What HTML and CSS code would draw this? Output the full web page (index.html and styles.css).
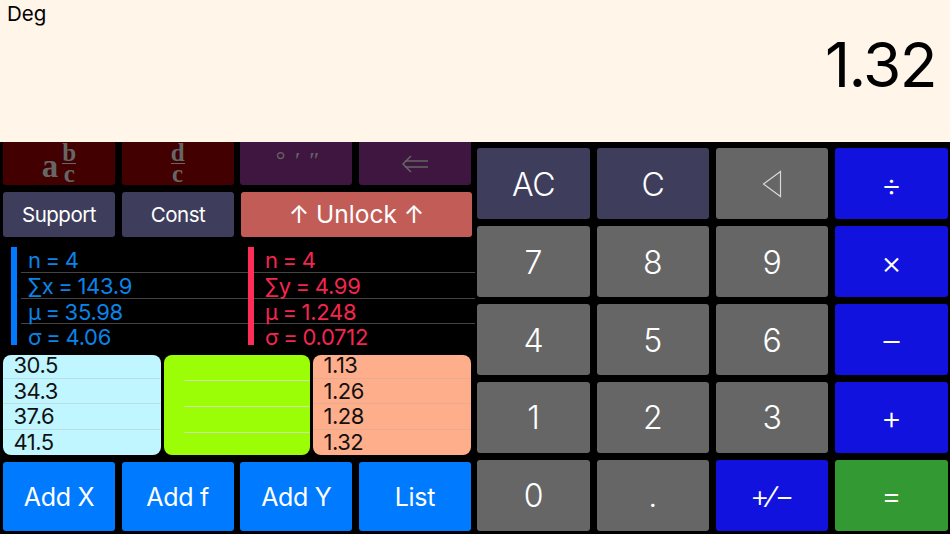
FILE: index.html
```html
<!doctype html>
<html>
<head>
  <meta charset="utf-8">
  <meta name="viewport" content="width=device-width, initial-scale=1">
  <title>Calculator</title>
  <link rel="stylesheet" href="styles.css">
</head>
<body>

  <div class="display">
    <div class="mode">Deg</div>
    <div class="value">1.32</div>
  </div>

  <div class="main">
    <div class="left">

      <div class="row locked-row">
        <div class="btn locked red">
          <span class="mixed">a</span>
          <span class="frac"><span class="num">b</span><span>c</span></span>
        </div>
        <div class="btn locked red">
          <span class="frac"><span class="num">d</span><span>c</span></span>
        </div>
        <div class="btn locked purple"><span class="dms">° ′ ″</span></div>
        <div class="btn locked purple">
          <svg width="28" height="18" viewBox="0 0 28 18" fill="none" stroke="#666" stroke-width="1.5">
            <path d="M10 1 L2 9 L10 17"/>
            <path d="M4 6 H27 M4 12 H27"/>
          </svg>
        </div>
      </div>

      <div class="row tools-row">
        <div class="btn slate">Support</div>
        <div class="btn slate">Const</div>
        <div class="btn unlock">↑ Unlock ↑</div>
      </div>

      <div class="stats">
        <div class="stat blue">
          <div class="bar"></div>
          <div class="stat-lines">
            <div class="stat-line">n = 4</div>
            <div class="stat-line">∑x = 143.9</div>
            <div class="stat-line">µ = 35.98</div>
            <div class="stat-line">σ = 4.06</div>
          </div>
        </div>
        <div class="stat pink">
          <div class="bar"></div>
          <div class="stat-lines">
            <div class="stat-line">n = 4</div>
            <div class="stat-line">∑y = 4.99</div>
            <div class="stat-line">µ = 1.248</div>
            <div class="stat-line">σ = 0.0712</div>
          </div>
        </div>
      </div>

      <div class="lists">
        <div class="list list-x">
          <div class="item">30.5</div>
          <div class="item">34.3</div>
          <div class="item">37.6</div>
          <div class="item">41.5</div>
        </div>
        <div class="list list-f">
          <div class="item"></div>
          <div class="item"></div>
          <div class="item"></div>
          <div class="item"></div>
        </div>
        <div class="list list-y">
          <div class="item">1.13</div>
          <div class="item">1.26</div>
          <div class="item">1.28</div>
          <div class="item">1.32</div>
        </div>
      </div>

      <div class="row add-row">
        <div class="btn azure">Add X</div>
        <div class="btn azure">Add f</div>
        <div class="btn azure">Add Y</div>
        <div class="btn azure">List</div>
      </div>

    </div>

    <div class="keys">
      <div class="btn key slate">AC</div>
      <div class="btn key slate">C</div>
      <div class="btn key gray">
        <svg width="20" height="28" viewBox="0 0 20 28" fill="none" stroke="#d8d8d8" stroke-width="1.2">
          <path d="M18.5 1.5 V26.5 L1.5 14 Z"/>
        </svg>
      </div>
      <div class="btn key op">÷</div>

      <div class="btn key gray">7</div>
      <div class="btn key gray">8</div>
      <div class="btn key gray">9</div>
      <div class="btn key op">×</div>

      <div class="btn key gray">4</div>
      <div class="btn key gray">5</div>
      <div class="btn key gray">6</div>
      <div class="btn key op">–</div>

      <div class="btn key gray">1</div>
      <div class="btn key gray">2</div>
      <div class="btn key gray">3</div>
      <div class="btn key op">+</div>

      <div class="btn key gray">0</div>
      <div class="btn key gray">.</div>
      <div class="btn key op sign">+∕−</div>
      <div class="btn key equals">=</div>
    </div>
  </div>

</body>
</html>
```

FILE: styles.css
```css
* {
  box-sizing: border-box;
}

html, body {
  margin: 0;
  height: 100%;
}

body {
  width: 950px;
  height: 534px;
  overflow: hidden;
  background: #000;
  color: #fff;
  font-family: Inter, "Liberation Sans", sans-serif;
}

.display {
  height: 142px;
  background: #fff5e9;
  color: #000;
  padding: 2px 14px 0 7px;
}

.mode {
  font-size: 20.5px;
  line-height: 24px;
}

.value {
  text-align: right;
  font-size: 62px;
  font-weight: 380;
  line-height: 72px;
  margin-top: 3px;
  letter-spacing: -1.6px;
}

.main {
  display: flex;
  height: 392px;
}

.left {
  width: 477.3px;
  padding-left: 3px;
  display: flex;
  flex-direction: column;
}

.row {
  display: grid;
  grid-template-columns: repeat(4, 112px);
  column-gap: 6.67px;
}

.btn {
  display: flex;
  align-items: center;
  justify-content: center;
  border-radius: 3px;
}

.locked-row {
  height: 43px;
}

.locked {
  border-radius: 0 0 3px 3px;
  color: #666;
  font-family: "Liberation Serif", serif;
  font-weight: bold;
  gap: 4px;
}

.red {
  background: #420000;
}

.purple {
  background: #3f163f;
}

.mixed {
  font-size: 33px;
  line-height: 30px;
  margin-top: 5px;
}

.frac {
  display: flex;
  flex-direction: column;
  align-items: center;
  font-size: 25px;
  line-height: 20px;
}

.num {
  border-bottom: 1.5px solid #666;
}

.dms {
  font-size: 24px;
  font-weight: normal;
  font-style: italic;
  word-spacing: 3px;
  margin-top: -6px;
}

.tools-row {
  height: 45px;
  margin-top: 7px;
  grid-template-columns: 112px 112px 231px;
  column-gap: 7px;
  font-size: 20.5px;
  letter-spacing: -0.5px;
}

.slate {
  background: #3e3e5c;
}

.unlock {
  background: #c15c56;
  font-size: 24.5px;
  letter-spacing: 0;
  padding-bottom: 2px;
}

.stats {
  display: grid;
  grid-template-columns: 237px 227px;
  margin: 10px 0 0 8px;
  height: 98px;
  font-size: 22px;
  letter-spacing: -0.3px;
  word-spacing: -1px;
}

.stat {
  display: flex;
}

.bar {
  width: 6px;
  height: 98px;
}

.stat-lines {
  flex: 1;
  margin-left: 4px;
}

.stat-line {
  height: 25.8px;
  line-height: 27px;
  border-bottom: 1px solid #444;
}

.stat-line:last-child {
  border-bottom: 0;
}

.blue {
  color: #0a84e8;
}

.blue .bar {
  background: #007aff;
}

.blue .stat-line {
  padding-left: 7px;
}

.pink {
  color: #f5254f;
}

.pink .bar {
  background: #ff2d55;
}

.pink .stat-lines {
  margin-left: 0;
}

.pink .stat-line {
  padding-left: 11px;
}

.lists {
  display: grid;
  grid-template-columns: 158px 146px 158px;
  grid-template-rows: 100px;
  column-gap: 3px;
  height: 100px;
  margin-top: 10px;
  color: #111;
  font-size: 22px;
  letter-spacing: -0.5px;
}

.list {
  border-radius: 8px;
}

.item {
  height: 25.6px;
  line-height: 25px;
  padding-left: 10.5px;
  border-bottom: 1px solid rgba(170, 170, 170, 0.3);
}

.item:first-child {
  height: 23.7px;
  line-height: 21px;
}

.item:last-child {
  height: 24px;
  border-bottom: 0;
}

.list-x {
  background: #c0f6ff;
}

.list-f {
  background: #9bfe06;
  padding: 0 0 0 20px;
}

.list-f .item {
  height: 26px;
  border-bottom: 1px solid #cfe0ae;
}

.list-f .item:last-child {
  height: 22px;
  border-bottom: 0;
}

.list-y {
  background: #ffae8b;
}

.add-row {
  height: 69px;
  margin-top: 7px;
  font-size: 25px;
  letter-spacing: -0.3px;
}

.azure {
  background: #007aff;
}

.keys {
  flex: 1;
  display: grid;
  grid-template-columns: repeat(4, 112.5px);
  grid-template-rows: repeat(5, 71px);
  column-gap: 6.8px;
  row-gap: 6.9px;
  padding-top: 6.3px;
  font-size: 32px;
  font-weight: 350;
}

.key {
  padding-top: 1px;
}

.gray {
  background: #666;
}

.slate.key {
  letter-spacing: -0.5px;
}

.op {
  background: #1212de;
}

.equals {
  background: #339933;
}

.sign {
  font-size: 30px;
  font-weight: 300;
}
```
